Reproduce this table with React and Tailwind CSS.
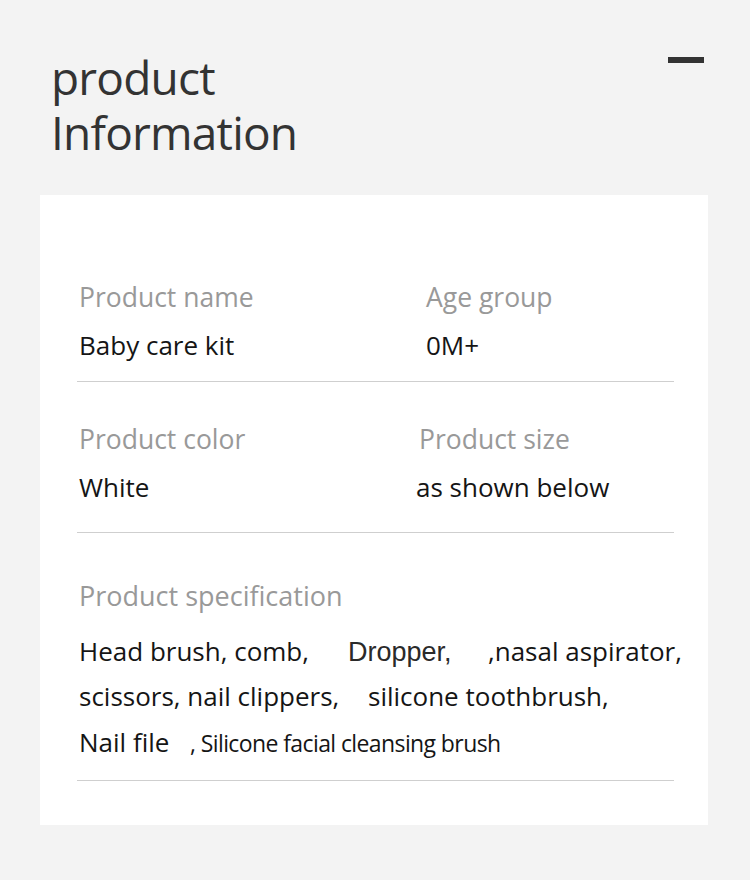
export default function App() {
  return (
    <div className="w-[750px] h-[880px] bg-[#f3f3f3] overflow-hidden font-['Open_Sans',sans-serif]">
      <div className="flex justify-between pl-[51px] pr-[46px] pt-[50px]">
        <h1 className="text-[46px] tracking-[-0.8px] text-[#333] font-normal">
          <div className="leading-[55px]">product</div>
          <div className="leading-[55px]">Information</div>
        </h1>
        <div className="mt-[7px] w-[36px] h-[6px] bg-[#333]" />
      </div>
      <div className="ml-[40px] mt-[35px] w-[668px] h-[630px] bg-white pt-[86px]">
        <div className="ml-[37px] w-[597px]">
          <div className="border-b border-[#cfcfcf] pb-[20px] grid grid-cols-[349px_1fr]">
            <div className="pl-[2px]">
              <div className="text-[26.5px] leading-[32px] text-[#999]">Product name</div>
              <div className="mt-[16px] text-[26px] leading-[32px] text-[#151515]">Baby care kit</div>
            </div>
            <div>
              <div className="text-[26.5px] leading-[32px] text-[#999]">Age group</div>
              <div className="mt-[16px] text-[26px] leading-[32px] text-[#151515]">0M+</div>
            </div>
          </div>
          <div className="border-b border-[#cfcfcf] pt-[41px] pb-[29px] grid grid-cols-[339px_1fr]">
            <div className="pl-[2px]">
              <div className="text-[26.5px] leading-[32px] text-[#999]">Product color</div>
              <div className="mt-[16px] text-[26px] leading-[32px] text-[#151515]">White</div>
            </div>
            <div>
              <div className="pl-[3px] text-[26.5px] leading-[32px] text-[#999]">Product size</div>
              <div className="mt-[16px] text-[26px] leading-[32px] text-[#151515]">as shown below</div>
            </div>
          </div>
          <div className="border-b border-[#cfcfcf] pt-[47px] pb-[15px] pl-[2px]">
            <div className="text-[27px] leading-[32px] text-[#999]">Product specification</div>
            <div className="mt-[17px] text-[26px] text-[#151515] whitespace-nowrap">
              <div className="flex items-baseline h-[45px] leading-[45px]">
                <span className="w-[269px] shrink-0">Head brush, comb,</span>
                <span className="w-[140px] shrink-0 font-['Liberation_Sans',sans-serif] text-[27px] text-[#2a2a2a]">Dropper,</span>
                <span>,nasal aspirator,</span>
              </div>
              <div className="flex items-baseline h-[45px] leading-[45px]">
                <span className="w-[289px] shrink-0">scissors, nail clippers,</span>
                <span>silicone toothbrush,</span>
              </div>
              <div className="flex items-baseline h-[46px] leading-[46px]">
                <span className="w-[111px] shrink-0">Nail file</span>
                <span className="text-[23px] tracking-[-0.6px]">, Silicone facial cleansing brush</span>
              </div>
            </div>
          </div>
        </div>
      </div>
    </div>
  );
}
